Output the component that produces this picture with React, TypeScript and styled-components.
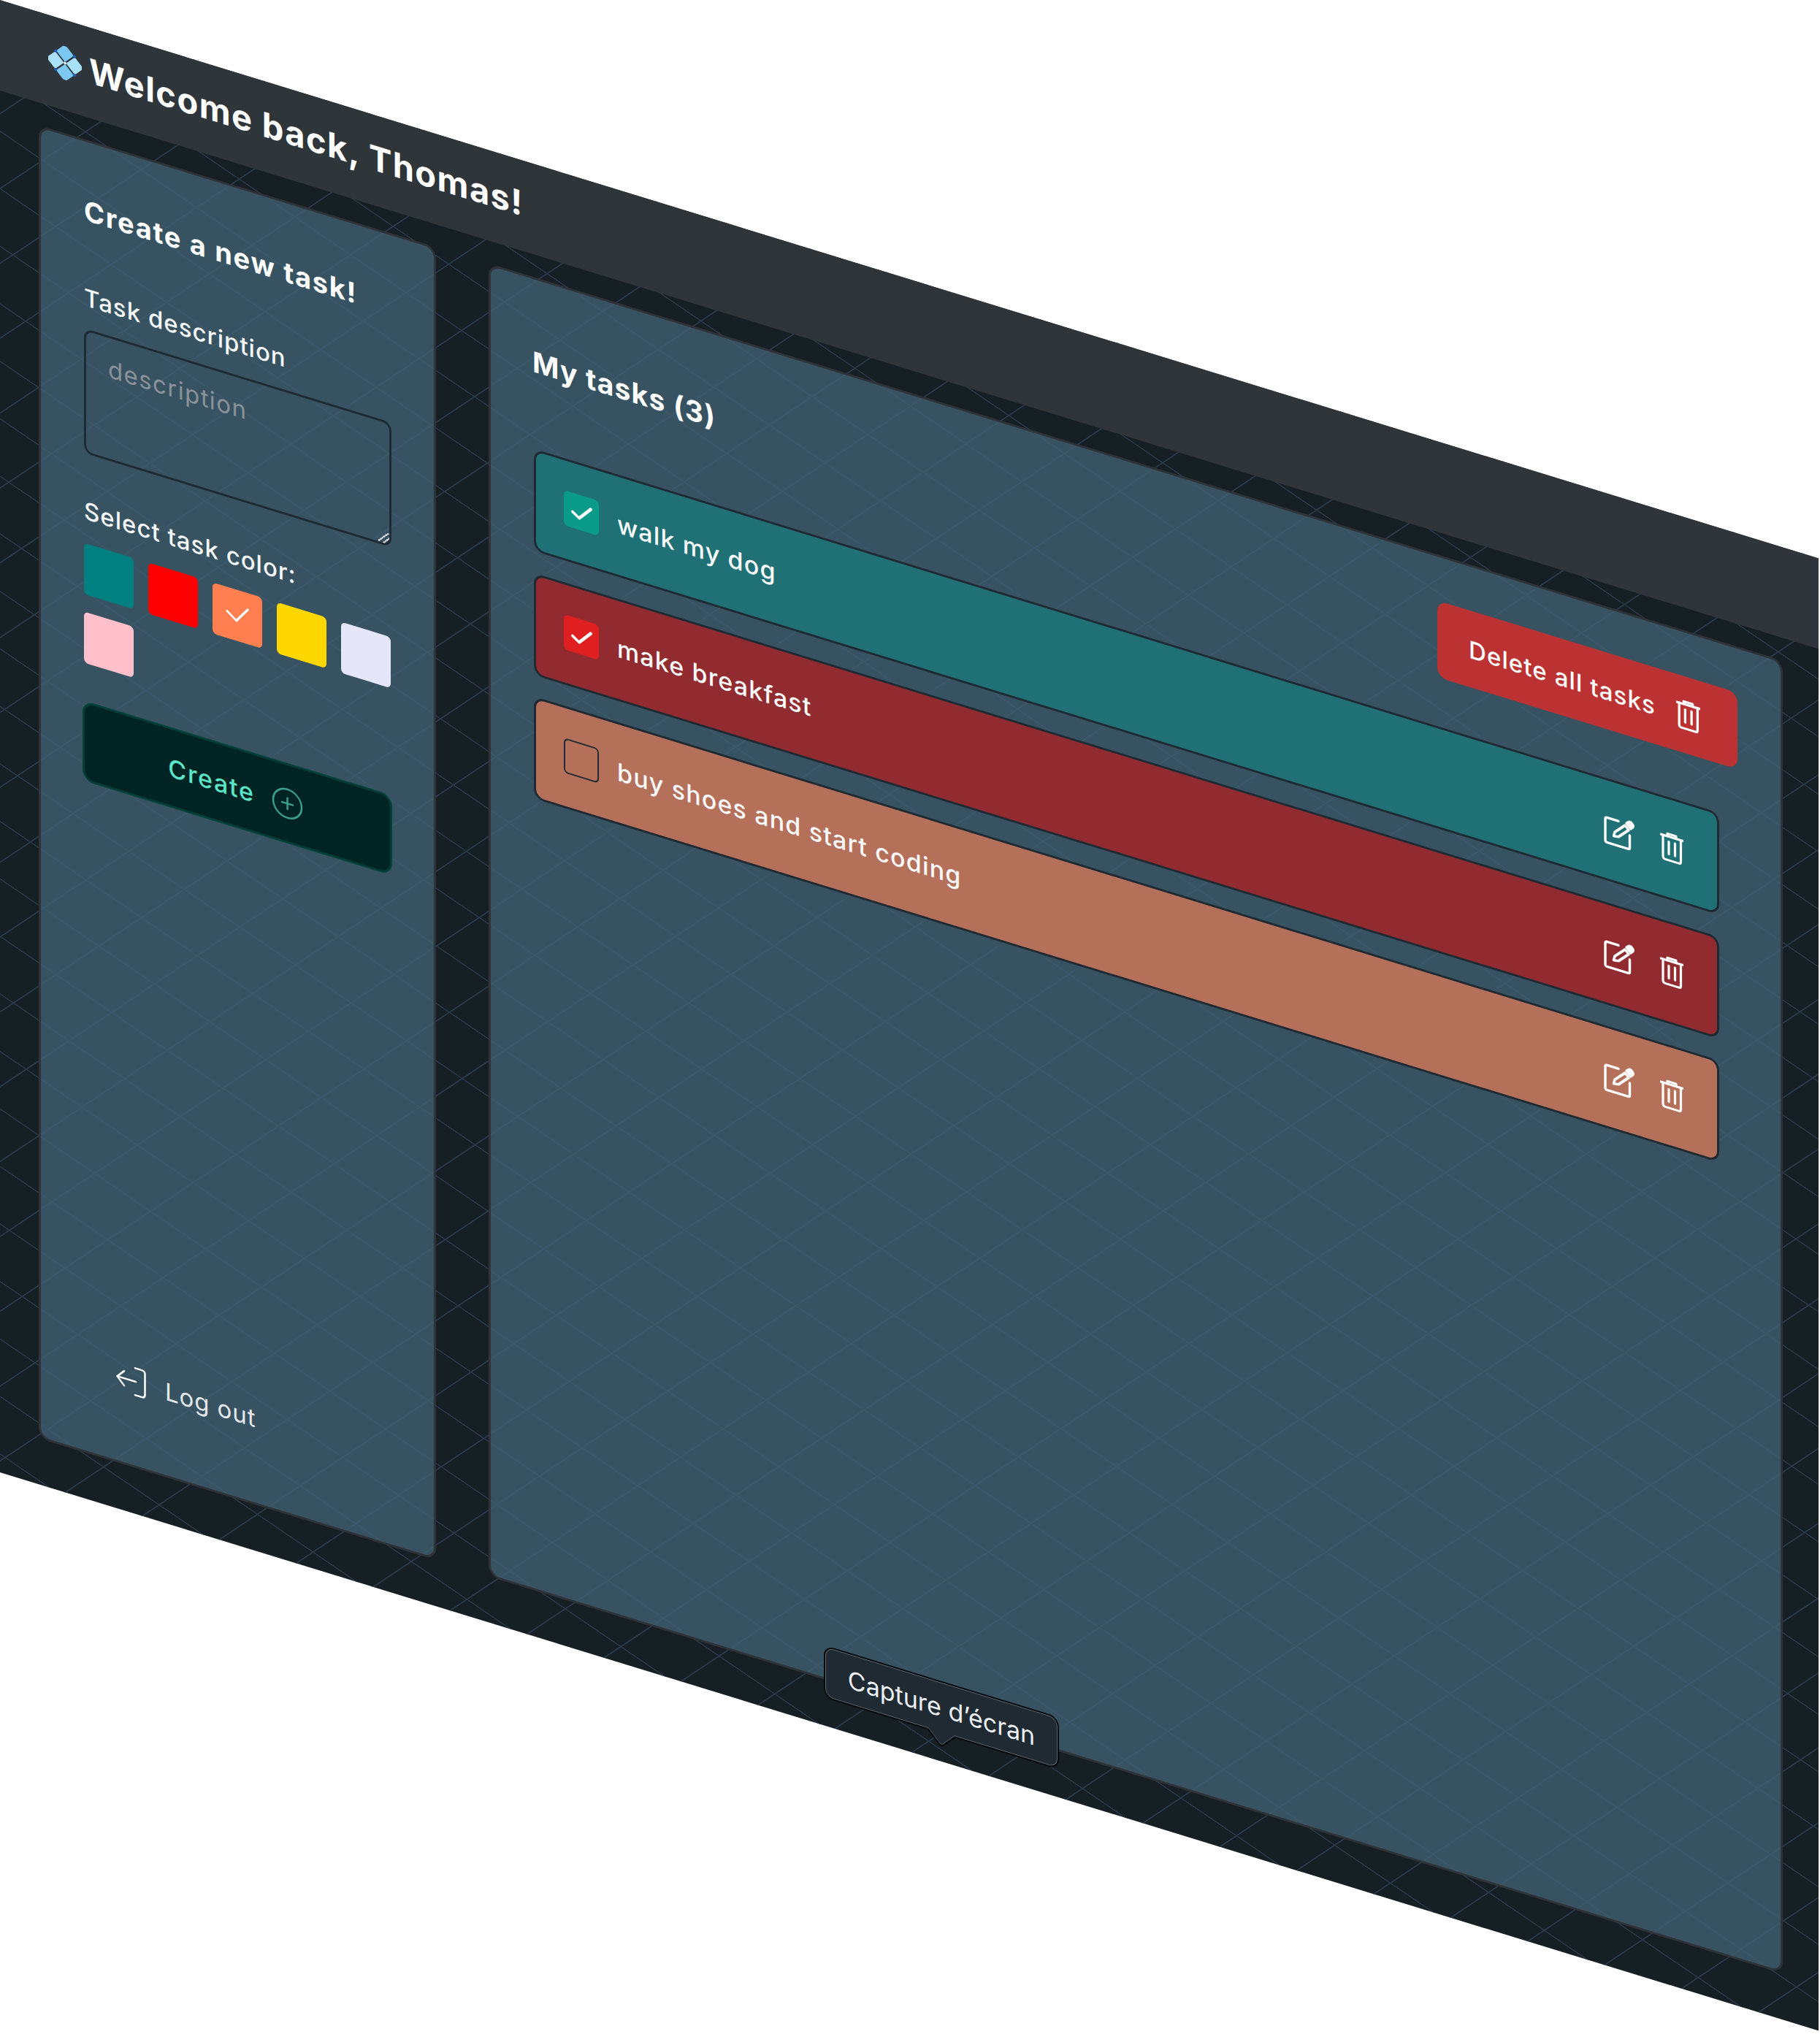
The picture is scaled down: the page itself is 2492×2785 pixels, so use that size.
import React from "react";
import styled, { createGlobalStyle } from "styled-components";

const Global = createGlobalStyle`
  html, body { margin: 0; padding: 0; background: #fff; overflow: hidden; width: 2492px; height: 2785px; }
  * { box-sizing: border-box; }
  #root { font-family: "Inter", "Liberation Sans", sans-serif; }
`;

const gridLine = "#2b394c";
const Page = styled.div`
  position: relative;
  width: 2490px;
  height: 2016px;
  display: flex;
  flex-direction: column;
  overflow: hidden;
  transform-origin: 0 0;
  transform: matrix(1, 0.307, 0, 1, 0, 0);
  background-color: #161f24;
  background-image:
    repeating-linear-gradient(20.5deg, transparent 0, transparent 22.6px, ${gridLine} 23.1px, ${gridLine} 24.1px, transparent 24.6px, transparent 73.76px),
    repeating-linear-gradient(135.8deg, transparent 0, transparent 37.2px, ${gridLine} 37.7px, ${gridLine} 38.7px, transparent 39.2px, transparent 73.47px);
`;

const Header = styled.header`
  height: 124px;
  flex: none;
  display: flex;
  align-items: center;
  gap: 10px;
  padding: 0 0 6px 66px;
  background: linear-gradient(90deg, #2f363b 0%, #2e3437 50%, #2f353a 100%);
`;

const Logo = styled.svg`
  width: 46px;
  height: 46px;
  flex: none;
`;

const Welcome = styled.h1`
  margin: 0;
  color: #fff;
  font-size: 47px;
  line-height: 56px;
  font-weight: 700;
  letter-spacing: 1.4px;
  white-space: nowrap;
`;

const Content = styled.main`
  flex: 1;
  min-height: 0;
  display: flex;
  gap: 72px;
  padding: 31px 49px 63px 53px;
`;

const Panel = styled.section`
  border: 3px solid #2f3337;
  border-radius: 16px;
  background: rgba(64, 96, 114, 0.8);
  display: flex;
  flex-direction: column;
`;

const Sidebar = styled(Panel)`
  flex: none;
  width: 544px;
  padding: 74px 59px 90px;
`;

const MainPanel = styled(Panel)`
  flex: 1;
  min-width: 0;
  padding: 60px 59px 0;
`;

const SideTitle = styled.h2`
  margin: 0;
  color: #fff;
  font-size: 38px;
  line-height: 40px;
  font-weight: 700;
  letter-spacing: 1.7px;
  white-space: nowrap;
`;

const FieldLabel = styled.label<{ $top: number }>`
  display: block;
  margin-top: ${(p) => p.$top}px;
  color: #f4f6f7;
  font-size: 33px;
  line-height: 40px;
  font-weight: 500;
  letter-spacing: 1px;
  white-space: nowrap;
`;

const Description = styled.textarea`
  display: block;
  width: 421px;
  height: 171px;
  margin-top: 23px;
  padding: 22px 30px;
  background: transparent;
  border: 3px solid #1f2a33;
  border-radius: 12px;
  outline: none;
  color: #fff;
  font-family: inherit;
  font-size: 33px;
  line-height: 40px;
  letter-spacing: 1.4px;
  &::placeholder { color: #8b9199; opacity: 1; }
  &::-webkit-resizer {
    background: linear-gradient(135deg, transparent 42%, #c8ccd0 42%, #c8ccd0 52%, transparent 52%, transparent 68%, #c8ccd0 68%, #c8ccd0 78%, transparent 78%);
  }
`;

const Swatches = styled.div`
  display: grid;
  grid-template-columns: repeat(5, 68px);
  grid-auto-rows: 70px;
  column-gap: 20px;
  row-gap: 24px;
  margin-top: 25px;
`;

const Swatch = styled.div<{ $color: string }>`
  border-radius: 6px;
  background: ${(p) => p.$color};
  display: flex;
`;

const SwatchCheck = styled.svg`
  width: 68px;
  height: 70px;
`;

const CreateButton = styled.button`
  height: 110px;
  width: 424px;
  margin: 52px 0 0 -2px;
  border: 3px solid #024038;
  border-radius: 16px;
  background: #002423;
  color: #5ce6c8;
  font-family: inherit;
  font-size: 34px;
  letter-spacing: 1.7px;
  font-weight: 500;
  display: flex;
  align-items: center;
  justify-content: center;
  gap: 23px;
  padding: 0 5px 0 0;
`;

const LogOutRow = styled.div`
  margin-top: auto;
  margin-left: 44px;
  display: flex;
  align-items: center;
  gap: 26px;
  color: #e4e8ea;
  font-size: 33px;
  line-height: 50px;
  letter-spacing: 0.9px;
`;

const TopRow = styled.div`
  display: flex;
  align-items: center;
  justify-content: space-between;
`;

const MainTitle = styled.h2`
  margin: 0 0 0 -2px;
  color: #fff;
  font-size: 39px;
  line-height: 44px;
  font-weight: 700;
  letter-spacing: 1.2px;
  white-space: nowrap;
`;

const DeleteAll = styled.button`
  height: 105px;
  width: 411px;
  border: none;
  border-radius: 14px;
  background: #bc3232;
  color: #fff;
  font-family: inherit;
  font-size: 33px;
  font-weight: 500;
  letter-spacing: 1.1px;
  display: flex;
  align-items: center;
  justify-content: flex-start;
  gap: 28px;
  padding: 0 0 0 43px;
  white-space: nowrap;
`;

const TaskList = styled.ul`
  list-style: none;
  margin: 67px 25px 0 0;
  padding: 0;
  display: flex;
  flex-direction: column;
  gap: 29.5px;
`;

const TaskRow = styled.li<{ $bg: string }>`
  height: 140px;
  display: flex;
  align-items: center;
  padding: 0 46px 4px 38px;
  border: 3px solid #1f2a33;
  border-radius: 14px;
  background: ${(p) => p.$bg};
`;

const CheckBox = styled.span<{ $fill?: string }>`
  flex: none;
  width: 48px;
  height: 48px;
  border-radius: 6px;
  background: ${(p) => p.$fill ?? "transparent"};
  border: ${(p) => (p.$fill ? "none" : "2.5px solid #222d36")};
  display: flex;
`;

const TaskText = styled.span`
  flex: 1;
  margin-left: 25px;
  color: #f8f9fa;
  font-size: 34px;
  line-height: 40px;
  font-weight: 500;
  letter-spacing: 1.15px;
  white-space: nowrap;
`;

const TaskActions = styled.div`
  flex: none;
  display: flex;
  align-items: center;
  gap: 35px;
`;

const Tooltip = styled.div`
  position: absolute;
  left: 1130px;
  top: 1908px;
  width: 318px;
  height: 68px;
  display: flex;
  align-items: center;
  justify-content: center;
  background: #1f2a33;
  border: 1.5px solid #5d676e;
  border-radius: 12px;
  box-shadow: 0 0 0 2px #05080a;
  color: #eceff1;
  font-size: 34px;
  font-weight: 400;
  white-space: nowrap;
  &::after {
    content: "";
    position: absolute;
    left: 145px;
    bottom: -14px;
    width: 25px;
    height: 25px;
    background: #1f2a33;
    border-right: 1.5px solid #5d676e;
    border-bottom: 1.5px solid #5d676e;
    border-bottom-right-radius: 4px;
    transform: rotate(45deg);
    box-shadow: 2px 2px 0 0 #05080a;
  }
`;

const TrashIcon = ({ w = 32, h = 40 }: { w?: number; h?: number }) => (
  <svg width={w} height={h} viewBox="0 0 32 40" fill="none" stroke="#fff" strokeWidth="3.2" strokeLinecap="round" strokeLinejoin="round">
    <path d="M1 6H31" />
    <path d="M10 6V2.5H22V6" />
    <path d="M4 6V35Q4 38.5 7.5 38.5H26Q28.5 38.5 28.5 35V6" />
    <path d="M12 13V30" />
    <path d="M20.5 13V30" />
  </svg>
);

const EditIcon = () => (
  <svg width="42" height="44" viewBox="0 0 42 44" fill="none" stroke="#fff" strokeWidth="3.4" strokeLinecap="round" strokeLinejoin="round">
    <path d="M20 8H4.5Q2 8 2 10.5V39.5Q2 42 4.5 42H33Q35.5 42 35.5 39.5V23" />
    <path d="M13.5 30.5L15 24.5L29 11L34 16L20 29.5Z" />
    <path d="M31 8L34 5Q36 3.4 38 5L39.5 6.5Q41 8.5 39.5 10.5L36.5 13.5Z" fill="#fff" />
  </svg>
);

const RowCheck = () => (
  <svg width="48" height="48" viewBox="0 0 48 48" fill="none" stroke="#fff" strokeWidth="4" strokeLinecap="round" strokeLinejoin="round">
    <path d="M12 26L21 32L37 15" />
  </svg>
);

const tasks = [
  { text: "walk my dog", bg: "#207176", check: "#0b9b8a" },
  { text: "make breakfast", bg: "#922b2f", check: "#e02020" },
  { text: "buy shoes and start coding", bg: "#b5705a" },
];

const swatches = ["#008080", "#ff0000", "#ff7f50", "#ffd700", "#e6e6fa", "#ffc0cb"];

export default function App() {
  return (
    <>
      <Global />
      <Page>
        <Header>
          <Logo viewBox="0 0 46 46">
            <g transform="rotate(45 23 23)">
              <rect x="5" y="5" width="17" height="17" rx="2" fill="#7cc8f4" />
              <rect x="24" y="5" width="17" height="17" rx="2" fill="#a9e0fa" />
              <rect x="5" y="24" width="17" height="17" rx="2" fill="#a9e0fa" />
              <rect x="24" y="24" width="17" height="17" rx="2" fill="#7cc8f4" />
              <circle cx="23" cy="23" r="2" fill="#dff4fd" />
              <circle cx="5" cy="23" r="2" fill="#1b5fc2" />
              <circle cx="41" cy="23" r="2" fill="#1b5fc2" />
              <circle cx="23" cy="5" r="2" fill="#1b5fc2" />
              <circle cx="23" cy="41" r="2" fill="#1b5fc2" />
            </g>
          </Logo>
          <Welcome>Welcome back, Thomas!</Welcome>
        </Header>
        <Content>
          <Sidebar>
            <SideTitle>Create a new task!</SideTitle>
            <FieldLabel $top={79} htmlFor="desc">Task description</FieldLabel>
            <Description id="desc" placeholder="description" />
            <FieldLabel $top={58}>Select task color:</FieldLabel>
            <Swatches>
              {swatches.map((c) => (
                <Swatch key={c} $color={c}>
                  {c === "#ff7f50" && (
                    <SwatchCheck viewBox="0 0 68 70" fill="none" stroke="#fff" strokeWidth="3" strokeLinecap="round" strokeLinejoin="round">
                      <path d="M20 33L32.6 42.5L48.4 22.5" />
                    </SwatchCheck>
                  )}
                </Swatch>
              ))}
            </Swatches>
            <CreateButton type="button">
              Create
              <svg width="43" height="43" viewBox="0 0 43 43" fill="none" stroke="#3c9e8c" strokeWidth="2.5" strokeLinecap="round">
                <circle cx="21.5" cy="21.5" r="19.5" />
                <path d="M21.5 14V29M14 21.5H29" />
              </svg>
            </CreateButton>
            <LogOutRow>
              <svg width="41" height="40" viewBox="0 0 41 40" fill="none" stroke="#fff" strokeWidth="2.5" strokeLinecap="round" strokeLinejoin="round">
                <path d="M26 1.5H35Q39.5 1.5 39.5 6V34Q39.5 38.5 35 38.5H26" />
                <path d="M27 20H1.5" />
                <path d="M11 10L1.5 20L11 30" />
              </svg>
              Log out
            </LogOutRow>
          </Sidebar>
          <MainPanel>
            <TopRow>
              <MainTitle>My tasks (3)</MainTitle>
              <DeleteAll type="button">
                Delete all tasks
                <TrashIcon w={33} h={41} />
              </DeleteAll>
            </TopRow>
            <TaskList>
              {tasks.map((t) => (
                <TaskRow key={t.text} $bg={t.bg}>
                  <CheckBox $fill={t.check}>{t.check && <RowCheck />}</CheckBox>
                  <TaskText>{t.text}</TaskText>
                  <TaskActions>
                    <EditIcon />
                    <TrashIcon />
                  </TaskActions>
                </TaskRow>
              ))}
            </TaskList>
          </MainPanel>
        </Content>
        <Tooltip>Capture d’écran</Tooltip>
      </Page>
    </>
  );
}
